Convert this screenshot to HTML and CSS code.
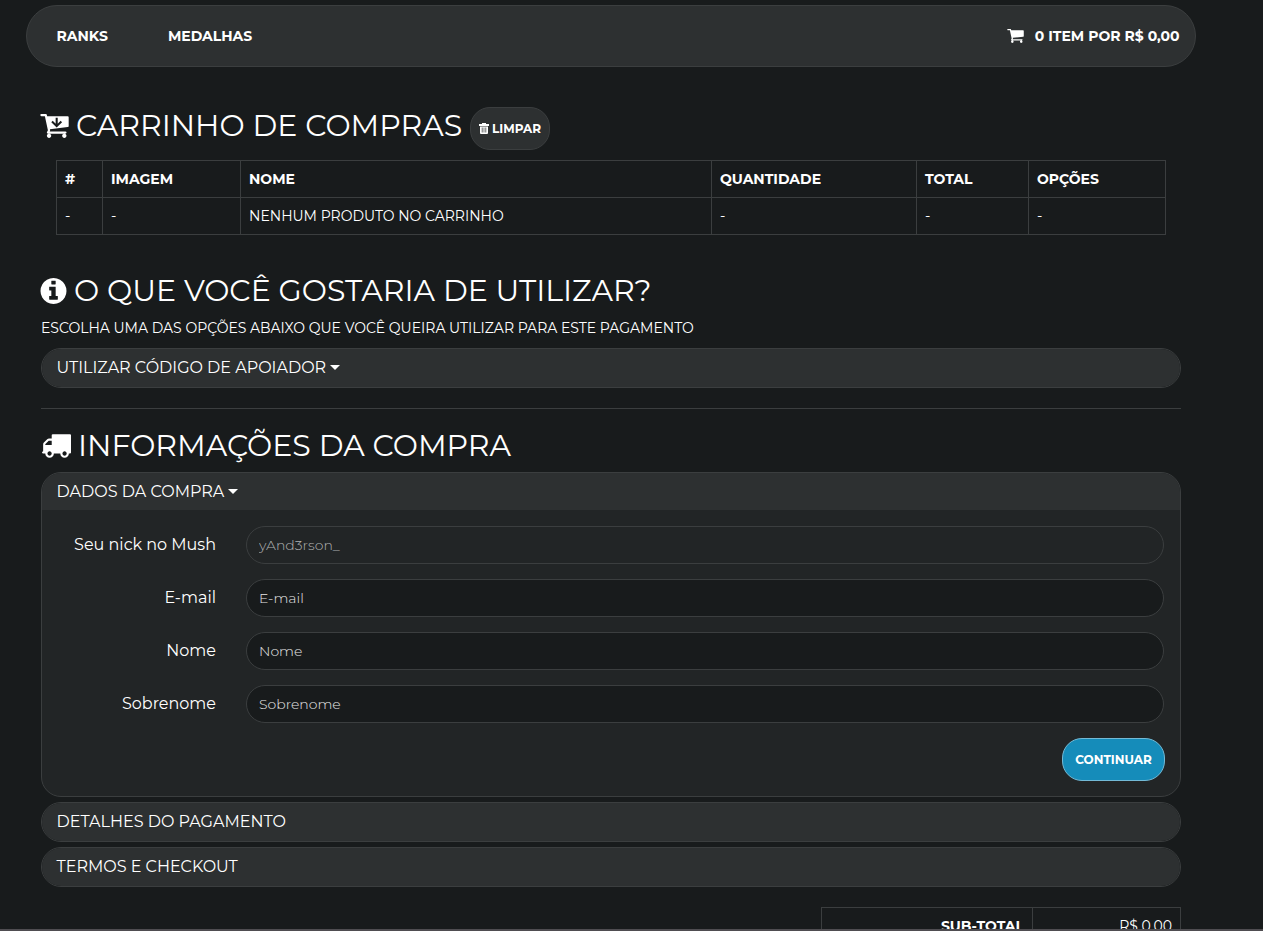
FILE: index.html
```html
<!DOCTYPE html>
<html lang="pt-BR">
<head>
  <meta charset="UTF-8">
  <meta name="viewport" content="width=device-width, initial-scale=1.0">
  <title>Carrinho de compras</title>
  <link rel="stylesheet" href="styles.css">
</head>
<body>
  <div class="page">
    <nav class="navbar">
      <a class="nav-link">RANKS</a>
      <a class="nav-link medalhas">MEDALHAS</a>
      <a class="nav-link nav-cart">
        <svg class="icon-cart" viewBox="64 256 1664 1408"><path d="M704 1536q0 52-38 90t-90 38-90-38-38-90 38-90 90-38 90 38 38 90zm896 0q0 52-38 90t-90 38-90-38-38-90 38-90 90-38 90 38 38 90zm128-1088v512q0 24-16.5 42.5t-40.5 21.5l-1044 122q13 60 13 70 0 16-24 64h920q26 0 45 19t19 45-19 45-45 19h-1024q-26 0-45-19t-19-45q0-11 8-31.5t16-36 21.5-40 15.5-29.5l-177-823h-204q-26 0-45-19t-19-45 19-45 45-19h256q16 0 28.5 6.5t19.5 15.5 13 24.5 8 26 5.5 29.5 4.5 26h1201q26 0 45 19t19 45z"/></svg>
        <span>0 ITEM POR R$ 0,00</span>
      </a>
    </nav>

    <main class="content">
      <!-- Carrinho -->
      <div class="titulo titulo-carrinho">
        <svg class="icon-carrinho" viewBox="64 256 1664 1408"><path d="M704 1536q0 52-38 90t-90 38-90-38-38-90 38-90 90-38 90 38 38 90zm896 0q0 52-38 90t-90 38-90-38-38-90 38-90 90-38 90 38 38 90zm128-1088v512q0 24-16.5 42.5t-40.5 21.5l-1044 122q13 60 13 70 0 16-24 64h920q26 0 45 19t19 45-19 45-45 19h-1024q-26 0-45-19t-19-45q0-11 8-31.5t16-36 21.5-40 15.5-29.5l-177-823h-204q-26 0-45-19t-19-45 19-45 45-19h256q16 0 28.5 6.5t19.5 15.5 13 24.5 8 26 5.5 29.5 4.5 26h1201q26 0 45 19t19 45z"/><path class="seta" d="M1024 470v490M750 700l274 270 274-270"/></svg>
        <h1>CARRINHO DE COMPRAS</h1>
        <button class="btn btn-limpar">
          <svg class="icon-lixo" viewBox="0 0 10 11"><path fill-rule="evenodd" d="M3 0h4v1h3v2H0V1h3zM1 3.5h8V10q0 1-1 1H2q-1 0-1-1zM2.8 4.5V9.5h.7V4.5zM4.7 4.5V9.5h.6V4.5zM6.5 4.5V9.5h.7V4.5z"/></svg>
          <span>LIMPAR</span>
        </button>
      </div>

      <table class="tabela">
        <thead>
          <tr>
            <th class="col-id">#</th>
            <th class="col-imagem">IMAGEM</th>
            <th class="col-nome">NOME</th>
            <th class="col-qtd">QUANTIDADE</th>
            <th class="col-total">TOTAL</th>
            <th>OPÇÕES</th>
          </tr>
        </thead>
        <tbody>
          <tr>
            <td>-</td>
            <td>-</td>
            <td>NENHUM PRODUTO NO CARRINHO</td>
            <td>-</td>
            <td>-</td>
            <td>-</td>
          </tr>
        </tbody>
      </table>

      <!-- Código de apoiador -->
      <div class="titulo titulo-opcoes">
        <svg class="icon-info" viewBox="128 128 1536 1536"><path d="M1152 1376v-160q0-14-9-23t-23-9h-96v-512q0-14-9-23t-23-9h-320q-14 0-23 9t-9 23v160q0 14 9 23t23 9h96v320h-96q-14 0-23 9t-9 23v160q0 14 9 23t23 9h448q14 0 23-9t9-23zm-128-896v-160q0-14-9-23t-23-9h-192q-14 0-23 9t-9 23v160q0 14 9 23t23 9h192q14 0 23-9t9-23zm640 416q0 209-103 385.5t-279.5 279.5-385.5 103-385.5-103-279.5-279.5-103-385.5 103-385.5 279.5-279.5 385.5-103 385.5 103 279.5 279.5 103 385.5z"/></svg>
        <h1>O QUE VOCÊ GOSTARIA DE UTILIZAR?</h1>
      </div>
      <p class="ajuda">ESCOLHA UMA DAS OPÇÕES ABAIXO QUE VOCÊ QUEIRA UTILIZAR PARA ESTE PAGAMENTO</p>
      <div class="painel">
        <div class="painel-titulo">UTILIZAR CÓDIGO DE APOIADOR<i class="caret"></i></div>
      </div>

      <hr>

      <!-- Informações da compra -->
      <div class="titulo titulo-info">
        <svg class="icon-truck" viewBox="0 256 1792 1408"><path d="M640 1408q0-52-38-90t-90-38-90 38-38 90 38 90 90 38 90-38 38-90zm-384-512h384v-256h-158q-13 0-22 9l-195 195q-9 9-9 22v30zm1280 512q0-52-38-90t-90-38-90 38-38 90 38 90 90 38 90-38 38-90zm256-1088v1024q0 15-4 26.5t-13.5 18.5-16.5 11.5-23.5 6-22.5 2-25.5 0-22.5-.5q0 106-75 181t-181 75-181-75-75-181h-384q0 106-75 181t-181 75-181-75-75-181h-64q-3 0-22.5.5t-25.5 0-22.5-2-23.5-6-16.5-11.5-13.5-18.5-4-26.5q0-26 19-45t45-19v-320q0-8-.5-35t0-38 2.5-34.5 6.5-37 14-30.5 22.5-30l198-198q19-19 50.5-32t58.5-13h160v-192q0-26 19-45t45-19h1024q26 0 45 19t19 45z"/></svg>
        <h1>INFORMAÇÕES DA COMPRA</h1>
      </div>
      <div class="painel painel-aberto">
        <div class="painel-titulo">DADOS DA COMPRA<i class="caret"></i></div>
        <form class="painel-corpo">
          <div class="campo">
            <label for="nick">Seu nick no Mush</label>
            <input type="text" id="nick" value="yAnd3rson_" disabled>
          </div>
          <div class="campo">
            <label for="email">E-mail</label>
            <input type="text" id="email" placeholder="E-mail">
          </div>
          <div class="campo">
            <label for="nome">Nome</label>
            <input type="text" id="nome" placeholder="Nome">
          </div>
          <div class="campo">
            <label for="sobrenome">Sobrenome</label>
            <input type="text" id="sobrenome" placeholder="Sobrenome">
          </div>
          <button type="button" class="btn btn-continuar">CONTINUAR</button>
        </form>
      </div>
      <div class="painel">
        <div class="painel-titulo">DETALHES DO PAGAMENTO</div>
      </div>
      <div class="painel">
        <div class="painel-titulo">TERMOS E CHECKOUT</div>
      </div>

      <table class="tabela tabela-total">
        <tr>
          <th>SUB-TOTAL</th>
          <td>R$ 0,00</td>
        </tr>
      </table>
    </main>
  </div>
</body>
</html>
```
FILE: styles.css
```css
* {
  box-sizing: border-box;
}
body {
  margin: 0;
  background-color: #181b1c;
  color: #fff;
  font-family: Montserrat, Inter, sans-serif;
  font-size: 14px;
  line-height: 20px;
}
.page {
  height: 931px;
  overflow: hidden;
  padding: 5px 0 0 26px;
  border-bottom: 2px solid #4f4d51;
}
svg {
  fill: #fff;
  flex: none;
}
.navbar {
  display: flex;
  align-items: center;
  width: 1170px;
  height: 62px;
  padding: 0 15.5px 0 29.5px;
  background-color: #2d3031;
  border: 1px solid #3b3e3f;
  border-radius: 31px;
}
.nav-link {
  font-weight: 700;
  white-space: nowrap;
}
.medalhas {
  margin-left: 60px;
}
.nav-cart {
  display: flex;
  align-items: center;
  margin-left: auto;
}
.icon-cart {
  width: 17px;
  height: 14px;
  margin-right: 11px;
}
.content {
  width: 1140px;
  margin-left: 15px;
}
.titulo {
  display: flex;
  align-items: center;
}
.titulo h1 {
  margin: 0;
  font-size: 30px;
  font-weight: 400;
  line-height: 34px;
  white-space: nowrap;
}
.titulo-carrinho {
  height: 43px;
  margin-top: 40px;
}
.titulo-carrinho h1 {
  width: 386px;
  margin: -5px 8px 0 7px;
}
.icon-carrinho {
  width: 29px;
  height: 24px;
  margin: -5px 0 0 -1px;
}
.seta {
  fill: none;
  stroke: #181b1c;
  stroke-width: 120;
}
.btn {
  height: 43px;
  border: 1px solid #3b3e3f;
  border-radius: 20px;
  background-color: #2d3031;
  color: #fff;
  font-family: inherit;
  font-size: 12px;
  font-weight: 700;
}
.btn-limpar {
  display: flex;
  align-items: center;
  justify-content: center;
  width: 80px;
  padding: 0;
}
.icon-lixo {
  width: 10px;
  height: 11px;
  margin-right: 3px;
}
.tabela {
  width: 1110px;
  margin: 10px 0 0 15px;
  border-collapse: collapse;
  table-layout: fixed;
}
.tabela th,
.tabela td {
  height: 37px;
  padding: 0 8px;
  border: 1px solid #3b3e3f;
  text-align: left;
  white-space: nowrap;
}
.tabela .col-id { width: 46px; }
.tabela .col-imagem { width: 138px; }
.tabela .col-nome { width: 471px; }
.tabela .col-qtd { width: 205px; }
.tabela .col-total { width: 112px; }
.titulo-opcoes {
  height: 34px;
  margin-top: 39px;
}
.icon-info {
  width: 27px;
  height: 26px;
  margin: 0 7px 0 -1px;
}
.ajuda {
  margin: 10px 0;
  white-space: nowrap;
}
.painel {
  margin-bottom: 5px;
  background-color: #222526;
  border: 1px solid #3b3e3f;
  border-radius: 20px;
  overflow: hidden;
}
.painel-titulo {
  display: flex;
  align-items: center;
  height: 38px;
  padding: 0 14.5px;
  background-color: #2d3031;
  font-size: 16px;
}
.caret {
  margin: -1px 0 0 4px;
  border-top: 5px solid #fff;
  border-left: 5px solid transparent;
  border-right: 5px solid transparent;
}
hr {
  margin: 20px 0;
  border: 0;
  border-top: 1px solid #3b3e3f;
}
.titulo-info {
  height: 34px;
  margin-bottom: 9px;
}
.icon-truck {
  width: 30px;
  height: 24px;
  margin-right: 7px;
}
.painel-aberto {
  height: 325px;
}
.painel-aberto .painel-titulo {
  height: 37px;
}
.painel-corpo {
  display: flex;
  flex-direction: column;
  gap: 15px;
  padding: 16px 16px 0 15px;
}
.campo {
  display: flex;
  height: 38px;
}
.campo label {
  width: 159px;
  margin-right: 30px;
  font-size: 16px;
  line-height: 37px;
  text-align: right;
}
.campo input {
  flex: 1;
  padding: 0 12px;
  background-color: #181b1c;
  border: 1px solid #3b3e3f;
  border-radius: 19px;
  color: #fff;
  font-family: inherit;
  font-size: 14px;
  font-weight: 300;
}
.campo input:disabled {
  background-color: #222526;
  color: #b0b2b3;
}
.campo input::placeholder {
  color: #e6e6e6;
}
.btn-continuar {
  align-self: flex-end;
  width: 103px;
  margin-right: -1px;
  padding: 0;
  background-color: #158cba;
  border-color: #73bad6;
}
.tabela-total {
  width: 360px;
  margin: 20px 0 0 auto;
}
.tabela-total th,
.tabela-total td {
  text-align: right;
}
.tabela-total th {
  width: 211px;
}
```
